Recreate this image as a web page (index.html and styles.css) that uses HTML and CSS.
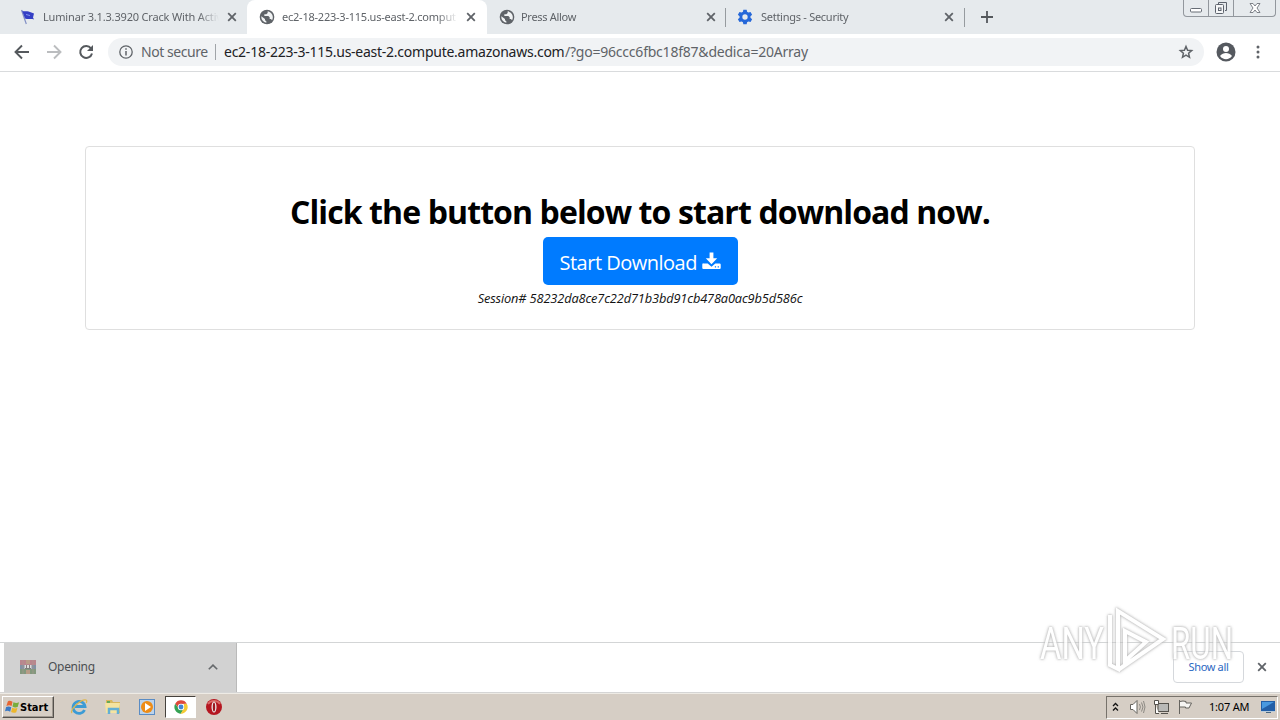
FILE: index.html
```html
<!DOCTYPE html>
<html lang="en">
<head>
  <meta charset="UTF-8">
  <meta name="viewport" content="width=device-width, initial-scale=1.0">
  <title>Start Download</title>
  <link rel="stylesheet" href="styles.css">
</head>
<body>
  <svg class="defs" width="0" height="0">
    <symbol id="globe" viewBox="0 0 24 24"><path fill="#5f6368" d="M12 1a11 11 0 1 0 0 22 11 11 0 0 0 0-22z"/><path fill="#f1f3f4" d="M3.500 11l5.500 4v2l2 1.500v2.300A9 9 0 0 1 3.500 11zM13 3.500v2.500l-2 2H8v2.500h6l2 2v2.500h2l1.500 2A9 9 0 0 0 13 3.500z"/></symbol>
    <symbol id="close" viewBox="0 0 10 10"><path d="M1.200 1.200l7.600 7.600M8.800 1.200L1.200 8.800" stroke="#5f6368" stroke-width="1.800"/></symbol>
  </svg>

  <div class="tabstrip">
    <div class="tab">
      <svg class="favicon" viewBox="0 0 16 16"><path d="M1.500 1l4.800 14" stroke="#8290c5" stroke-width="1.200"/><path fill="#343fc5" d="M2 1.500c3 2 5-.5 8 1.500l4 1.500-1 4 1 2c-4-1.500-5 .5-9-1z"/><path d="M6 5.500l4 1" stroke="#8495ed"/></svg>
      <span class="title t1">Luminar 3.1.3.3920 Crack With Activ</span>
      <svg class="close"><use href="#close"/></svg>
    </div>
    <div class="tab active">
      <svg class="favicon"><use href="#globe"/></svg>
      <span class="title t2">ec2-18-223-3-115.us-east-2.comput</span>
      <svg class="close"><use href="#close"/></svg>
    </div>
    <div class="tab line">
      <svg class="favicon"><use href="#globe"/></svg>
      <span class="title t3">Press Allow</span>
      <svg class="close"><use href="#close"/></svg>
    </div>
    <div class="tab line">
      <svg class="favicon gear" viewBox="0 0 24 24"><path fill="#2668d9" fill-rule="evenodd" d="M9.500 1h5l.6 3.200 2 1.200 3.200-1 2.400 4.200-2.500 2.200v2.400l2.500 2.200-2.400 4.200-3.200-1-2 1.200-.6 3.200h-5l-.6-3.200-2-1.200-3.200 1L1.300 15.400l2.500-2.200v-2.400L1.300 8.600l2.400-4.200 3.200 1 2-1.200zM12 8a4 4 0 1 0 0 8 4 4 0 0 0 0-8z"/></svg>
      <span class="title t4">Settings - Security</span>
      <svg class="close"><use href="#close"/></svg>
    </div>
    <svg class="new-tab" viewBox="0 0 12 12"><path d="M6 0v12M0 6h12" stroke="#54585c" stroke-width="1.800"/></svg>
    <div class="window-buttons">
      <span><svg width="14" height="16"><rect x="1.500" y="8.500" width="11" height="3.500" rx="1" fill="#fff" stroke="#666c75"/></svg></span>
      <span><svg width="14" height="16"><path d="M4.500 4V2.500h8v8H11" fill="none" stroke="#5d636d"/><rect x="1.500" y="4.500" width="8" height="9" rx="1" fill="#f5f6f7" stroke="#5d636d"/><rect x="4.500" y="8" width="2.500" height="2.500" fill="none" stroke="#5d636d"/></svg></span>
      <span class="wide"><svg width="12" height="16"><path d="M1 3.500h3l2 2.500 2-2.500h3L8 8l3 4.500H8L6 10l-2 2.500H1L4 8z" fill="#fff" stroke="#70757d" stroke-width=".9"/></svg></span>
    </div>
  </div>

  <div class="toolbar">
    <svg class="nav" viewBox="0 0 16 16"><path d="M15 8H2M8 1.500L1.500 8 8 14.500" fill="none" stroke="#55595d" stroke-width="1.900"/></svg>
    <svg class="nav" viewBox="0 0 16 16"><path d="M1 8h13M8 1.500L14.500 8 8 14.500" fill="none" stroke="#bbbdbf" stroke-width="1.900"/></svg>
    <svg class="nav" viewBox="0 0 16 16"><path d="M13 4.300A6 6 0 1 0 14 9.500" fill="none" stroke="#55595d" stroke-width="2"/><path d="M15 1v6H9z" fill="#55595d"/></svg>
    <div class="omnibox">
      <svg class="info" viewBox="0 0 14 14"><circle cx="7" cy="7" r="6.200" fill="none" stroke="#5f6368" stroke-width="1.300"/><path d="M7 6v4.500M7 3.300v1.500" stroke="#5f6368" stroke-width="1.500"/></svg>
      <span class="secure">Not secure</span>
      <span class="divider"></span>
      <span class="host">ec2-18-223-3-115.us-east-2.compute.amazonaws.com</span><span class="path">/?go=96ccc6fbc18f87&amp;dedica=20Array</span>
      <svg class="star" viewBox="0 0 16 16"><path d="M8 2.500l1.600 3.700 4.100.4-3.100 2.700.9 4L8 11.200l-3.500 2.100.9-4-3.100-2.700 4.100-.4z" fill="none" stroke="#5f6368" stroke-width="1.500"/></svg>
    </div>
    <svg class="user" viewBox="0 0 20 20"><circle cx="10" cy="10" r="9.500" fill="#55595f"/><circle cx="10" cy="7" r="3" fill="#fff"/><path d="M4 14c1.300-2.100 4-3 6-3s4.700.9 6 3a7.200 7.200 0 0 1-12 0z" fill="#fff"/></svg>
    <svg class="dots" viewBox="0 0 4 14"><g fill="#5f6368"><circle cx="2" cy="2" r="1.500"/><circle cx="2" cy="7" r="1.500"/><circle cx="2" cy="12" r="1.500"/></g></svg>
  </div>

  <main class="page">
    <div class="card">
      <h1><span>Click the button below to start download now.</span></h1>
      <button class="btn"><span>Start Download</span>
        <svg viewBox="0 0 20 18"><path fill="#fff" d="M8 0h4v6h4l-6 6.500L4 6h4z"/><path fill="#fff" fill-rule="evenodd" d="M1.500 11.500H6l4 3.500 4-3.500h4.500q1.200 0 1.200 1.200v3.600q0 1.200-1.200 1.200h-17Q.3 17.500.3 16.300v-3.600q0-1.200 1.200-1.200zM13.500 14.500v1.300h1.300v-1.300zm3 0v1.300h1.300v-1.300z"/></svg>
      </button>
      <em class="session">Session# 58232da8ce7c22d71b3bd91cb478a0ac9b5d586c</em>
    </div>
  </main>

  <div class="shelf">
    <div class="download">
      <svg class="archive" viewBox="0 0 16 16"><path fill="#b9858d" d="M0 1h16v5H0z"/><path fill="#8291a3" d="M0 6h16v4H0z"/><path fill="#83987e" d="M0 10h16v5H0z"/><path fill="#b89c88" d="M6 1h4v4H6zM6 11h4v4H6z"/><path fill="#dedbd9" d="M4.500 6h7v4h-7z"/><path d="M6.500 6v3M9.500 6v3M5 9.500h6" stroke="#817d7d"/><path d="M3 1v14M13 1v14" stroke="#ad9c91" stroke-width=".6"/></svg>
      <span>Opening</span>
      <svg class="chevron" viewBox="0 0 10 6"><path d="M.8 5.300L5 1.100l4.200 4.200" fill="none" stroke="#66696c" stroke-width="1.600"/></svg>
    </div>
    <button class="show-all"><span>Show all</span></button>
    <svg class="shelf-close" viewBox="0 0 10 10"><use href="#close"/></svg>
  </div>

  <div class="taskbar">
    <div class="start">
      <svg viewBox="0 0 16 16"><path fill="#e76532" d="M3 2c2-1 3-.5 5 .3L7 7C5 6 4 6 1.500 7z"/><path fill="#79ad3c" d="M9 3c2 .8 4 .9 6 0l-1.500 5c-2 .8-4 .5-5.500-.5z"/><path fill="#3a79c5" d="M1.200 8c2-1 3.500-.8 5.500.2L5.500 13c-2-1.200-4-1-5.500-.4z"/><path fill="#edb72b" d="M7.700 8.700c2 1 3.600 1 5.500.3L12 13.500c-2 .9-4 .7-5.500-.3z"/></svg>
      <b>Start</b>
    </div>
    <div class="quick">
      <svg viewBox="0 0 18 18"><path d="M14.500 12A6 6 0 1 1 15 8.500H5" fill="none" stroke="#3c9bd5" stroke-width="2.800"/><path d="M2 15C-1 12 11 1 16 2c1 .3 1 1.500.2 3" fill="none" stroke="#deb64b" stroke-width="1.200"/></svg>
      <svg viewBox="0 0 18 18"><path fill="#d9b75e" d="M2 2h6l1 2h7v11H2z"/><path fill="#f5e3a0" d="M1 5h15l-1 10H2z"/><path d="M5 16v-5h9v5" fill="none" stroke="#63afd5" stroke-width="2.500"/><path fill="#65a957" d="M3 3h3v2H3z"/></svg>
      <svg viewBox="0 0 18 18"><rect x="1.500" y="1.500" width="15" height="15" fill="#bcd3eb" stroke="#5a8cc4"/><circle cx="9" cy="9" r="6" fill="#ee8c16"/><path fill="#fff" d="M7 5l6 4-6 4z"/></svg>
      <span class="running"><svg viewBox="0 0 18 18"><path fill="#df493b" d="M2.500 5.300A7.500 7.500 0 0 1 15.500 5.300L9 5.500 6 10z"/><path fill="#35a254" d="M2.500 5.300A7.500 7.500 0 0 0 9 16.500l3-5.500-6-1z"/><path fill="#f5ca35" d="M15.500 5.300A7.500 7.500 0 0 1 8.500 16.500L12 11V5.500z"/><circle cx="9" cy="9" r="3.600" fill="#fff"/><circle cx="9" cy="9" r="2.700" fill="#4285d5"/></svg></span>
      <svg viewBox="0 0 18 18"><circle cx="9" cy="9" r="8" fill="#b51620"/><path d="M3 6a7 6 0 0 1 12 0" fill="none" stroke="#da6a68" stroke-width="2"/><ellipse cx="9" cy="9" rx="2.500" ry="5.500" fill="#eee"/><ellipse cx="9" cy="9" rx="1.200" ry="4.500" fill="#9c1720"/></svg>
    </div>
    <div class="tray">
      <svg class="expand" width="7" height="10"><path d="M1 4l2.500-2.500L6 4M1 8.500L3.500 6 6 8.500" fill="none" stroke="#111" stroke-width="1.300"/></svg>
      <svg width="17" height="16"><path d="M1.500 5.500H4l4-4v13l-4-4H1.500z" fill="#fff" stroke="#66645f"/><path d="M10.500 5q1.800 3 0 6M12.500 3.500q3 4.500 0 9M14.500 2q3 6 0 12" fill="none" stroke="#8c8983"/></svg>
      <svg width="17" height="16"><rect x="5" y="4.500" width="10.500" height="8" fill="#b9b9b7" stroke="#55524d"/><path d="M8 14.500h7M2.500 6v8.500H6M1.500 1.500h4v4h-4z" fill="#fff" stroke="#55524d"/></svg>
      <svg width="17" height="16"><path d="M2.500 1v14M3 2.500q3-1 6 0v1.500h5.500L12 9H8.500V8H3" fill="#f6f5f2" stroke="#66645f"/></svg>
      <span class="clock">1:07 AM</span>
      <svg class="desktop" width="16" height="16"><path fill="#235fa7" d="M1 2h14v10H1z"/><path fill="#4999df" d="M2 3h12L2 10z"/><path fill="#b9cbda" d="M1 12h14v1H1z"/><path fill="#496782" d="M6 13h5v1H6z"/></svg>
    </div>
  </div>

  <svg class="watermark" viewBox="0 0 204 72">
    <text x="6" y="53" textLength="64" lengthAdjust="spacingAndGlyphs">ANY</text>
    <text x="137" y="53" textLength="62" lengthAdjust="spacingAndGlyphs">RUN</text>
    <path d="M76 9v50l8 4V5l45 28-45 31M91 55V25l21 11z"/>
  </svg>
</body>
</html>
```
FILE: styles.css
```css
* {
  box-sizing: border-box;
}

body {
  margin: 0;
  height: 720px;
  overflow: hidden;
  display: flex;
  flex-direction: column;
  background: #fff;
  font-family: "Noto Sans", "Liberation Sans", sans-serif;
  font-size: 11px;
  color: #5f6368;
}

svg {
  flex: none;
  display: block;
}

.defs {
  position: absolute;
}

span, b, em {
  white-space: nowrap;
}

/* tabs */
.tabstrip {
  height: 34px;
  flex: none;
  display: flex;
  background: #e6eaed;
  padding-left: 8px;
}

.tab {
  width: 239px;
  height: 34px;
  display: flex;
  align-items: center;
  padding: 0 10px 0 12px;
}

.tab.active {
  width: 240px;
  background: #fff;
  border-radius: 8px 8px 0 0;
}

.tab.line {
  background: linear-gradient(#969b9f, #969b9f) right 8px / 1px 19px no-repeat;
}

.favicon {
  width: 16px;
  height: 16px;
}

.gear {
  margin-left: -1px;
}

.title {
  width: 176px;
  margin-left: 7px;
  line-height: 18px;
  -webkit-mask-image: linear-gradient(90deg, #000 88%, transparent);
}

.t1 {
  letter-spacing: -.17px;
}

.t2 {
  letter-spacing: -.23px;
}

.t3 {
  letter-spacing: -.3px;
  text-indent: -1px;
}

.t4 {
  letter-spacing: -.27px;
  text-indent: 1px;
}

.close {
  width: 10px;
  height: 10px;
  margin-left: 8px;
}

.new-tab {
  width: 12px;
  height: 12px;
  margin: 11px 0 0 16px;
}

.window-buttons {
  margin: 0 4px 0 auto;
  display: flex;
  width: 93px;
  height: 17px;
  border: 1px solid #92979d;
  border-top: 0;
  border-radius: 0 0 4px 4px;
}

.window-buttons span {
  width: 25px;
  display: flex;
  justify-content: center;
  border-right: 1px solid #92979d;
}

.window-buttons .wide {
  width: 41px;
  border: 0;
}

/* toolbar */
.toolbar {
  height: 38px;
  flex: none;
  display: flex;
  align-items: center;
  padding: 0 20px 2px 14px;
  border-bottom: 1px solid #d9dbdd;
}

.nav {
  width: 16px;
  height: 16px;
  margin-right: 16px;
}

.nav + .nav + .nav {
  margin-right: 14px;
}

.omnibox {
  width: 1096px;
  height: 28px;
  display: flex;
  align-items: center;
  border-radius: 14px;
  background: #f1f3f5;
  padding: 0 10px 0 11px;
  font-size: 14px;
}

.info {
  width: 14px;
  height: 14px;
  margin-right: 8px;
}

.divider {
  width: 1px;
  height: 16px;
  margin: 0 8px 0 7px;
  background: #a0a4a8;
}

.secure {
  width: 67px;
  letter-spacing: -.45px;
}

.host {
  width: 341px;
  letter-spacing: -.25px;
  color: #202124;
}

.path {
  letter-spacing: -.22px;
}

.star {
  width: 16px;
  height: 16px;
  margin-left: auto;
}

.user {
  width: 20px;
  height: 20px;
  margin-left: 12px;
}

.dots {
  width: 4px;
  height: 14px;
  margin-left: auto;
}

/* page */
.page {
  height: 570px;
  flex: none;
  padding: 74px 85px 0;
  font-family: "Open Sans", "Noto Sans", sans-serif;
}

.card {
  height: 184px;
  display: flex;
  flex-direction: column;
  align-items: center;
  padding-top: 46px;
  border: 1px solid #dfdfdf;
  border-radius: 4px;
}

h1 {
  margin: 0 0 6px;
  line-height: 38px;
  font-size: 32px;
  font-weight: 700;
  letter-spacing: -.9px;
  color: #000;
}

.btn {
  width: 195px;
  height: 48px;
  display: flex;
  align-items: center;
  padding: 2px 17px 0 17px;
  border: 0;
  border-radius: 5px;
  background: #007bff;
  color: #fff;
  font: 20px "Open Sans", "Noto Sans", sans-serif;
  letter-spacing: -.5px;
}

.btn svg {
  width: 19px;
  height: 18px;
  margin: -3px 0 0 auto;
}

.session {
  margin-top: 4px;
  line-height: 18px;
  font-size: 12.8px;
  letter-spacing: -.14px;
  color: #111;
}

/* download shelf */
.shelf {
  height: 51px;
  flex: none;
  display: flex;
  align-items: center;
  padding: 0 13px 0 4px;
  border-top: 1px solid #d3d5d6;
  border-bottom: 1px solid #d5d5d5;
}

.download {
  width: 233px;
  height: 49px;
  display: flex;
  align-items: center;
  padding: 0 18px 2px 16px;
  border-right: 1px solid #bababa;
  background: #d2d2d2;
  font-size: 12px;
  letter-spacing: -.3px;
  color: #4c4f52;
}

.archive {
  width: 16px;
  height: 16px;
  margin-right: 12px;
}

.chevron {
  width: 10px;
  height: 6px;
  margin-left: auto;
}

.show-all {
  width: 71px;
  height: 32px;
  margin: 0 0 2px auto;
  padding: 0;
  border: 1px solid #d5d8dc;
  border-radius: 4px;
  background: #fff;
  color: #2b68c2;
  font: 11px "Noto Sans", "Liberation Sans", sans-serif;
  letter-spacing: -.35px;
}

.shelf-close {
  width: 10px;
  height: 10px;
  margin: 0 0 2px 13px;
}

/* taskbar */
.taskbar {
  height: 27px;
  flex: none;
  display: flex;
  align-items: center;
  padding: 0 2px 0 2px;
  border-top: 1px solid #eeebe5;
  background: #d6cec5;
  color: #000;
}

.start {
  width: 52px;
  height: 22px;
  display: flex;
  align-items: center;
  padding-left: 2px;
  border: 1px solid;
  border-color: #fff #55514c #55514c #fff;
  box-shadow: inset -1px -1px #9f9991;
  font-family: "DejaVu Sans Condensed", "DejaVu Sans", sans-serif;
}

.start svg {
  width: 15px;
  height: 16px;
}

.quick {
  display: flex;
  align-items: center;
  margin-left: 16px;
}

.quick svg {
  width: 18px;
  height: 18px;
  margin-right: 16px;
}

.running {
  width: 31px;
  height: 22px;
  display: flex;
  align-items: center;
  justify-content: center;
  margin: 0 9px 0 -7px;
  border: 1px solid;
  border-color: #46423d #fff #fff #46423d;
  background: #fff;
}

.quick .running svg {
  width: 16px;
  height: 16px;
  margin: 0;
}

.tray {
  width: 172px;
  height: 23px;
  margin-left: auto;
  display: flex;
  align-items: center;
  padding-left: 5px;
  border: 1px solid;
  border-color: #77726b #fff #fff #77726b;
}

.tray svg {
  margin-right: 7px;
}

.tray .expand {
  margin-right: 10px;
}

.clock {
  margin: 0 8px 2px 8px;
  width: 42px;
  letter-spacing: -.2px;
}

.tray .desktop {
  margin: 0 1px 0 auto;
}

/* watermark lies over the page and the shelf */
.watermark {
  position: absolute;
  left: 1034px;
  top: 606px;
  width: 204px;
  height: 72px;
  overflow: visible;
  pointer-events: none;
  font-family: Roboto, sans-serif;
  font-size: 45px;
  fill: #fff;
  opacity: .85;
  filter: drop-shadow(0 0 1px #aaa) drop-shadow(0 0 1.500px #ccc);
}

.watermark path {
  fill: none;
  stroke: #fff;
  stroke-width: 4px;
}
```
